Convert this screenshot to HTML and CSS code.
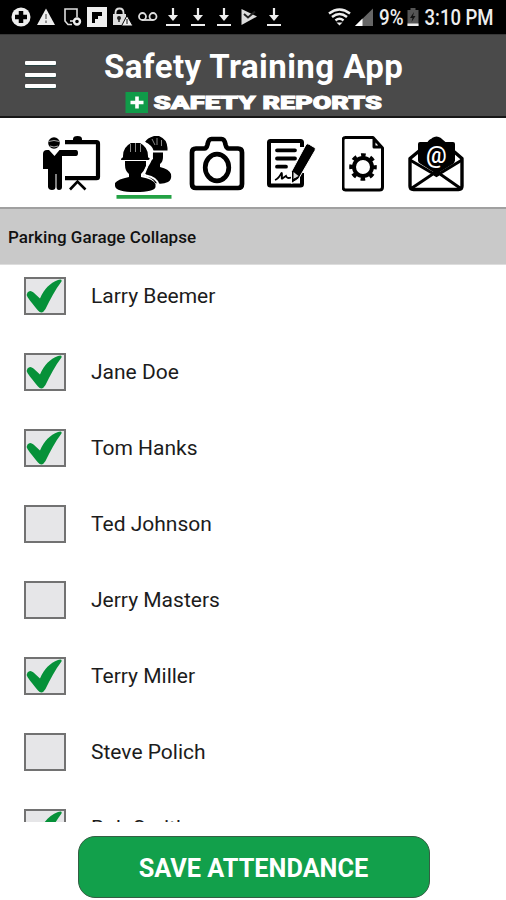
FILE: index.html
```html
<!DOCTYPE html>
<html lang="en">
<head>
<meta charset="utf-8">
<title>Safety Training App</title>
<link rel="stylesheet" href="styles.css">
</head>
<body>
<svg class="defs" width="0" height="0">
  <symbol id="download" viewBox="0 0 26 34"><path d="M13 8v11M6 25h14" fill="none" stroke="#eee" stroke-width="2.2"/><path d="M8 15h10l-5 6z" fill="#eee"/></symbol>
  <symbol id="check" viewBox="0 0 42 38"><path d="M3.500 15.500Q6 12.500 9.500 15.500L16 21.500C20 12 26 6 34 3Q38.500 1.500 37.500 4.500C31 13 26 23 21.500 32Q18 38 14 33.500C10.500 29 6.500 24.500 3.500 20Q2 17.500 3.500 15.500z" fill="#069139"/></symbol>
</svg>
<div class="status">
  <div class="notices">
    <svg viewBox="0 0 26 34"><circle cx="13" cy="17" r="9.500" fill="#eee"/><path d="M13 11v12M7 17h12" stroke="#000" stroke-width="4.500"/></svg>
    <svg viewBox="0 0 26 34"><path d="M13 8.500L22 25H4z" fill="#eee"/><path d="M13 14v5M13 20.500v2.500" stroke="#888" stroke-width="1.800"/></svg>
    <svg viewBox="0 0 26 34"><path d="M13 24.500H9L6 21V9h12v8" fill="none" stroke="#ddd" stroke-width="1.600"/><circle cx="18" cy="21.500" r="3" fill="none" stroke="#eee" stroke-width="2.400"/><path d="M11 21h3" stroke="#eee" stroke-width="1.500"/></svg>
    <svg viewBox="0 0 26 34"><path d="M3 7h20v20H3z" fill="#eee"/><path d="M8 12h10v4h-4v3h-3v4H8z" fill="#000"/></svg>
    <svg viewBox="0 0 26 34"><path d="M6.500 15v-2q0-4.500 4-4.500t4 4.500v2" fill="none" stroke="#ddd" stroke-width="1.800"/><path d="M4 14h13v11H4z" fill="#ddd"/><circle cx="10" cy="18" r="2" fill="#222"/><path d="M10 18v4" stroke="#222" stroke-width="1.500"/><path d="M18 15.500l6 10.500H12.500z" fill="#eee" stroke="#000"/><path d="M18 19v5" stroke="#555" stroke-width="1.500"/></svg>
    <svg viewBox="0 0 26 34"><g fill="none" stroke="#ddd" stroke-width="1.800"><circle cx="7.500" cy="16.500" r="3.500"/><circle cx="18" cy="16.500" r="3.500"/><path d="M7.500 20H18"/></g></svg>
    <svg><use href="#download"/></svg>
    <svg><use href="#download"/></svg>
    <svg><use href="#download"/></svg>
    <svg viewBox="0 0 26 34"><path d="M5.500 9L21 16.500 5.500 25z" fill="#ddd"/><path d="M8 14l4 3.500 7-6" fill="none" stroke="#222" stroke-width="2"/></svg>
    <svg><use href="#download"/></svg>
  </div>
  <div class="system">
    <svg class="wifi" viewBox="328 0 24 34"><g fill="none" stroke="#eee" stroke-width="2.500"><path d="M329 13.500q10.500-8 21 0M332 17q7.500-6 15 0M335.500 20.500q4-3.500 8 0"/></g><path d="M336.500 22.500h6l-3 3z" fill="#eee"/></svg>
    <svg class="signal" viewBox="354 0 20 34"><path d="M355 26L373 8.500V26z" fill="#666"/><path d="M355 26l7.500-7.500V26z" fill="#fff"/></svg>
    <svg class="readout" viewBox="379 0 120 34"><text x="379" y="25" textLength="24.500" lengthAdjust="spacingAndGlyphs">9%</text><path d="M407.500 10h3V8h5v2h3v16h-11z" fill="#555"/><path d="M414 12l-4 6h2.500l-1 4 4-6H413z" fill="#111"/><path d="M407.500 23.500h11V26h-11z" fill="#eee"/><text x="424.500" y="25" textLength="69" lengthAdjust="spacingAndGlyphs">3:10 PM</text></svg>
  </div>
</div>
<header class="header">
  <div class="menu"><i></i><i></i><i></i></div>
  <div class="brand">
    <h1>Safety Training App</h1>
    <svg class="logo" viewBox="125 92 260 22"><path d="M125.500 92h22.500v21h-22.500z" fill="#109b49"/><path d="M137 96.500v12M130.500 102.500h13" stroke="#fff" stroke-width="3.600"/><text x="153.500" y="109" textLength="102" lengthAdjust="spacingAndGlyphs">SAFETY</text><text x="262.500" y="109" textLength="119.500" lengthAdjust="spacingAndGlyphs">REPORTS</text></svg>
  </div>
</header>
<nav class="tabs">
  <svg class="w59" viewBox="42 130 59 70"><g fill="none" stroke="#000"><path d="M65 142.200h31.500q1.500 0 1.500 1.500v33q0 1.500-1.500 1.500H65" stroke-width="4.200"/><path d="M70 189.500l7.500-8 8 8" stroke-width="2.600"/></g><path d="M73 141v-2q0-3 4.500-3t4.500 3v2z"/><circle cx="54" cy="143" r="5.800"/><path d="M48.500 141.500q5.500-2 11 0M50 146q4 2 8 0" fill="none" stroke="#aaa" stroke-width="1"/><path d="M43 154q0-4 4-4h2l5.500 6 5-6H76q2 0 2 3t-2 3H62v31q0 3-3 3-2.500 0-2.500-3v-13h-1v13q0 3-3.500 3t-4-3V169h-5z"/></svg>
  <svg class="w58 current" viewBox="115 130 58 70"><path d="M145 142q2-4 9-6h5q8 3 8.500 12v2.500h-14q-1-5-8.500-8.500zM153 152.500h10v4.500q0 5-3 7v3q9 2 11 7 1 6-3 8-6 3-13 1-2-5-12-8l5-8q5-7 5-14.500z"/><path d="M123 156q0-9 8-13h9q8 4 8 13v1.500h-25zM121 160q0-3 4-3h21q4 0 4 3z"/><path d="M125 161h21v5q-2 5-5 8v3q12 2 14.500 7v3q-1 5-20 5-19.500 0-20.500-6v-3q3-4 14-6v-3q-4-3-4-9z"/><path d="M130.500 144v8M135.500 143v9M140.500 144v8M152 139l3 6M157 138v7M161.500 140v6" stroke="#999" stroke-width=".9"/><path d="M121 160.500h29M152 151.500h16" stroke="#fff" stroke-width="1.200" fill="none"/><path d="M144 142.500q8 4 8 16l-5 4v4l-3 8 2 1q11 2 13 10" stroke="#fff" stroke-width="2" fill="none"/><path d="M116.500 195h55v3.800h-55z" fill="#23a244"/></svg>
  <svg class="w58 camera" viewBox="188 130 58 70"><g fill="none" stroke="#000" stroke-width="4.700" stroke-linejoin="round"><path d="M196 148.500h8.500q2 0 3-4 1-5.500 4-5.500h10q3 0 4 5.500 1 4 3 4h9.500q4 0 4 4V184q0 4-4 4h-42q-4 0-4-4v-31.500q0-4 4-4z"/><ellipse cx="217" cy="167.500" rx="11.800" ry="13.300"/></g></svg>
  <svg class="w51 form" viewBox="265 130 51 70"><path d="M302 147v-4.500q0-1.500-1.500-1.500h-30q-1.500 0-1.500 1.500V184q0 1.500 1.500 1.500H300.500q1.500 0 1.500-1.500v-11" fill="none" stroke="#000" stroke-width="4"/><path d="M277 150.300h18M277 158.500h18M277 166.700h9" stroke="#000" stroke-width="3.800" stroke-linecap="round"/><path d="M275 180q3-1 6-6 1-3 1 2-1 4 1 2l3-2q1 3 5 1.500" fill="none" stroke="#000" stroke-width="1.800"/><path d="M306 144.500q1.500-1.500 3.500 0l5 3q1.500 1 .5 3l-16.500 28.500-7 4.500v-12z" stroke="#fff" stroke-width="1"/><path d="M293.500 172l5 4-5 3z" fill="#ddd"/><path d="M294 178l2 1.500-2 1.500z"/></svg>
  <svg class="w43 report" viewBox="342 130 43 70"><path d="M346 137.500h27l9.500 10.500V187q0 3-3 3h-34q-2.500 0-2.500-3v-47q0-2.500 2.500-2.500zM374 138v9h8" fill="none" stroke="#000" stroke-width="3" stroke-linejoin="round"/><circle cx="363" cy="167" r="12" fill="none" stroke="#000" stroke-width="3.600" stroke-dasharray="4.600 4.825" stroke-dashoffset="2.300"/><circle cx="363" cy="167" r="9" fill="none" stroke="#000" stroke-width="4"/></svg>
  <svg class="w59 mail" viewBox="407 130 59 70"><path d="M410 158.500l23-19q3.500-2.500 7 0l22 19V186q0 3.500-3.500 3.500h-45q-3.500 0-3.500-3.500z" fill="#fff" stroke="#000" stroke-width="3.400" stroke-linejoin="round"/><path d="M418 144q0-2 2-2h8q1-4 5-2h7q3 0 4 2h9q2 0 2 2v16.500q0 2-3 4L436.500 174 420 163.500q-2-1-2-3z"/><path d="M410 160l26.500 15.500L462 160M412 188l24.500-16.500L460 188" fill="none" stroke="#000" stroke-width="3"/><text x="436.200" y="162.500" text-anchor="middle" class="at">@</text></svg>
</nav>
<div class="topic">Parking Garage Collapse</div>
<ul class="people">
  <li><span class="box"><svg><use href="#check"/></svg></span><span>Larry Beemer</span></li>
  <li><span class="box"><svg><use href="#check"/></svg></span><span>Jane Doe</span></li>
  <li><span class="box"><svg><use href="#check"/></svg></span><span>Tom Hanks</span></li>
  <li><span class="box"></span><span>Ted Johnson</span></li>
  <li><span class="box"></span><span>Jerry Masters</span></li>
  <li><span class="box"><svg><use href="#check"/></svg></span><span>Terry Miller</span></li>
  <li><span class="box"></span><span>Steve Polich</span></li>
  <li><span class="box"><svg><use href="#check"/></svg></span><span>Bob Smith</span></li>
</ul>
<footer class="footer"><button class="save">SAVE ATTENDANCE</button></footer>
</body>
</html>
```
FILE: styles.css
```css
* { box-sizing: border-box; }
body {
  margin: 0;
  width: 506px;
  height: 900px;
  overflow: hidden;
  display: flex;
  flex-direction: column;
  background: #fff;
  font-family: Roboto, "Liberation Sans", sans-serif;
  color: #111;
}
svg { display: block; flex: none; }
.defs { position: absolute; }

.status {
  height: 34px;
  flex: none;
  display: flex;
  justify-content: space-between;
  background: #000;
  color: #eee;
}
.notices { display: flex; padding-left: 8px; }
.notices svg { width: 26px; height: 34px; margin-right: -0.67px; }
.system { display: flex; width: 178px; }
.wifi { width: 24px; height: 34px; }
.signal { width: 20px; height: 34px; margin-left: 2px; }
.readout { width: 120px; height: 34px; margin-left: 5px; }
.readout text { font: 500 21.500px Roboto, sans-serif; fill: #eee; }

.header {
  height: 84px;
  flex: none;
  display: flex;
  background: #4a4a4a;
  border-top: 1px solid #383838;
  border-bottom: 2px solid #171717;
}
.menu {
  width: 31px;
  margin: 26px 0 0 25px;
  display: flex;
  flex-direction: column;
  gap: 7.500px;
}
.menu i { height: 4px; background: #fff; border-radius: 1px; box-shadow: 0 1px 1px #284545; }
.brand { margin-left: 48px; }
h1 {
  margin: 12px 0 0;
  height: 45px;
  line-height: 39px;
  font-size: 33px;
  font-weight: 700;
  letter-spacing: 0.42px;
  color: #fff;
  white-space: nowrap;
}
.logo { width: 260px; height: 22px; margin-left: 21px; }
.logo text { font: 900 18px Roboto, sans-serif; fill: #fff; stroke: #fff; stroke-width: .9px; }

.tabs {
  height: 89px;
  flex: none;
  display: flex;
  padding: 12px 0 0 42px;
}
.tabs svg { height: 70px; }
.w59 { width: 59px; }
.w58 { width: 58px; }
.w51 { width: 51px; }
.w43 { width: 43px; }
.current { margin-left: 14px; }
.camera { margin-left: 15px; }
.form { margin-left: 19px; }
.report { margin-left: 26px; }
.mail { margin-left: 22px; }
.at { font: 500 23px Roboto, sans-serif; fill: #fff; }

.topic {
  height: 58px;
  flex: none;
  padding-left: 8px;
  border-top: 2px solid #a0a0a0;
  border-bottom: 1px solid #ddd;
  background: #c9c9c9;
  line-height: 57px;
  font-size: 17px;
  font-weight: 500;
  letter-spacing: 0.05px;
}

.people {
  list-style: none;
  margin: 0;
  padding: 12px 0 0 24px;
  height: 557px;
  flex: none;
  overflow: hidden;
}
.people li {
  height: 76px;
  display: flex;
  align-items: flex-start;
  gap: 25px;
  font-size: 21px;
  line-height: 38px;
  color: #1c1c1c;
}
.box {
  width: 42px;
  height: 38px;
  border: 2px solid #727272;
  background: #e6e6e8;
}
.box svg { width: 42px; height: 38px; margin: -2px; }

.footer { display: flex; justify-content: center; padding: 14px 0 0 1px; }
.save {
  width: 352px;
  height: 62px;
  border: 1.500px solid #345e43;
  border-radius: 17px;
  background: #12a04b;
  color: #fff;
  font: 700 25.300px Roboto, sans-serif;
  padding: 2px 0 0;
  white-space: nowrap;
}
```
